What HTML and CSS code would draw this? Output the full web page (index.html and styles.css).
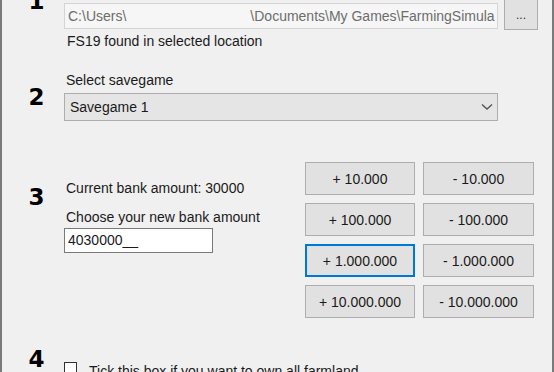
FILE: index.html
```html
<!DOCTYPE html>
<html lang="en">

<head>
    <meta charset="UTF-8">
    <title>FS19 savegame editor</title>
    <link rel="stylesheet" href="styles.css">
</head>

<body>
    <div class="window">
        <!-- 1: game folder -->
        <div class="step step-1">
            <div class="num">1</div>
            <div class="content">
                <div class="path-row">
                    <div class="path-box">C:\Users\<span class="gap"></span>\Documents\My Games\FarmingSimula</div>
                    <button class="browse">...</button>
                </div>
                <p class="status">FS19 found in selected location</p>
            </div>
        </div>

        <!-- 2: savegame -->
        <div class="step step-2">
            <div class="num">2</div>
            <div class="content">
                <p class="label">Select savegame</p>
                <div class="combo">
                    <span>Savegame 1</span>
                    <svg class="chevron" width="12" height="8" viewBox="0 0 12 8">
                        <polyline points="1,1.5 6,6 11,1.5" fill="none" stroke="#555" stroke-width="1.4" />
                    </svg>
                </div>
            </div>
        </div>

        <!-- 3: bank -->
        <div class="step step-3">
            <div class="num">3</div>
            <div class="bank">
                <p class="label">Current bank amount: 30000</p>
                <p class="label label-2">Choose your new bank amount</p>
                <div class="amount">4030000__</div>
            </div>
            <div class="btn-grid">
                <button class="btn">+ 10.000</button>
                <button class="btn">- 10.000</button>
                <button class="btn">+ 100.000</button>
                <button class="btn">- 100.000</button>
                <button class="btn focus">+ 1.000.000</button>
                <button class="btn">- 1.000.000</button>
                <button class="btn">+ 10.000.000</button>
                <button class="btn">- 10.000.000</button>
            </div>
        </div>

        <!-- 4: farmland -->
        <div class="step step-4">
            <div class="num">4</div>
            <div class="check-row">
                <span class="checkbox"></span>
                <span class="check-label">Tick this box if you want to own all farmland</span>
            </div>
        </div>
    </div>
</body>

</html>
```

FILE: styles.css
```css
body {
    margin: 0;
    background-color: #f0f0f0;
    font-family: "Liberation Sans", Arial, sans-serif;
    font-size: 14px;
    color: #1a1a1a;
}

p {
    margin: 0;
    line-height: 17px;
}

.window {
    width: 554px;
    height: 372px;
    box-sizing: border-box;
    border-left: 2px solid #7a7a7a;
    border-right: 2px solid #7a7a7a;
    overflow: hidden;
}

.step {
    display: flex;
    align-items: flex-start;
}

.num {
    width: 55px;
    padding-left: 7px;
    text-align: center;
    font-family: "DejaVu Sans", Verdana, sans-serif;
    font-weight: bold;
    font-size: 23px;
    line-height: 23px;
    color: #000;
}

.content {
    width: 474px;
}

/* step 1 */
.step-1 {
    margin-top: -10px;
}

.path-row {
    display: flex;
    align-items: flex-end;
}

.path-box {
    width: 434px;
    height: 26px;
    box-sizing: border-box;
    margin-bottom: 1px;
    padding: 4px 3px;
    border: 1px solid #d4d4d4;
    background-color: #f6f6f6;
    color: #6d6d6d;
    white-space: nowrap;
    overflow: hidden;
    line-height: 17px;
}

.gap {
    display: inline-block;
    width: 124px;
}

.browse {
    width: 34px;
    height: 40px;
    margin-left: 6px;
    padding: 10px 0 0;
    border: 1px solid #adadad;
    background-color: #e1e1e1;
    font-family: inherit;
    font-size: 12px;
    color: #333;
}

.status {
    margin-top: 3px;
    padding-left: 3px;
}

/* step 2 */
.step-2 {
    margin-top: 22px;
}

.step-2 .num {
    padding-top: 14px;
}

.label {
    padding-left: 2px;
}

.combo {
    display: flex;
    align-items: center;
    justify-content: space-between;
    width: 434px;
    height: 28px;
    box-sizing: border-box;
    margin-top: 4px;
    padding: 0 4px 0 5px;
    border: 1px solid #adadad;
    background-color: #e5e5e5;
}

/* step 3 */
.step-3 {
    margin-top: 41px;
}

.step-3 .num {
    padding-top: 24px;
}

.bank {
    width: 241px;
    padding-top: 18px;
}

.label-2 {
    margin-top: 12px;
}

.amount {
    width: 149px;
    height: 25px;
    box-sizing: border-box;
    margin-top: 2px;
    padding: 3px 3px;
    border: 1px solid #7a7a7a;
    background-color: #fff;
    line-height: 17px;
}

.btn-grid {
    display: grid;
    grid-template-columns: 110px 111px;
    grid-auto-rows: 33px;
    column-gap: 8px;
    row-gap: 8px;
}

.btn {
    border: 1px solid #adadad;
    background-color: #e1e1e1;
    font-family: inherit;
    font-size: 14px;
    color: #1a1a1a;
    padding: 0;
}

.btn.focus {
    border: 2px solid #0078d7;
}

/* step 4 */
.step-4 {
    margin-top: 29px;
}

.step-4 .num {
    padding-top: 1px;
}

.check-row {
    display: flex;
    align-items: flex-start;
}

.checkbox {
    width: 13px;
    height: 13px;
    box-sizing: border-box;
    margin-top: 15px;
    border: 1px solid #333;
    background-color: #fff;
}

.check-label {
    margin-top: 16px;
    margin-left: 12px;
    line-height: 17px;
}
```
